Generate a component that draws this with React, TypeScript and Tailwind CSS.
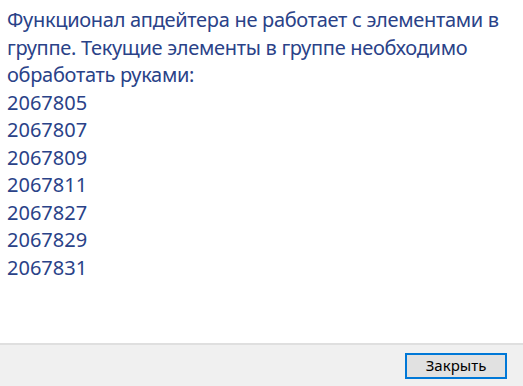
import React from 'react';

const ids = ['2067805', '2067807', '2067809', '2067811', '2067827', '2067829', '2067831'];

export default function App() {
  return (
    <div
      className="flex h-[386px] w-[523px] flex-col bg-white"
      style={{ fontFamily: '"Noto Sans", "Open Sans", sans-serif' }}
    >
      <div className="flex-1 pl-[7px] pt-[6px] text-[20px] leading-[27.5px] text-[#2a4288]">
        <div className="tracking-[-0.3px]">
          <div>Функционал апдейтера не работает с элементами в</div>
          <div>группе. Текущие элементы в группе необходимо</div>
          <div>обработать руками:</div>
        </div>
        {ids.map((id) => (
          <div key={id}>{id}</div>
        ))}
      </div>
      <div className="flex h-[43px] items-center justify-end border-t-2 border-[#dfdfdf] bg-[#f0f0f0] pr-[16px]">
        <button
          type="button"
          className="flex h-[26px] w-[102px] items-center justify-center border-2 border-[#0078d7] bg-[#e1e1e1] text-[15px] text-black"
        >
          Закрыть
        </button>
      </div>
    </div>
  );
}
